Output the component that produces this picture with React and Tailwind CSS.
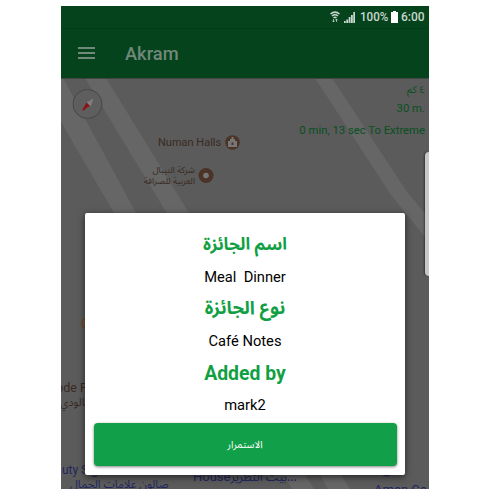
const ARABIC = 'font-["Noto_Sans_Arabic","Noto_Naskh_Arabic","DejaVu_Sans",sans-serif]';

function StatusBar() {
  return (
    <div className="flex h-[22px] items-center justify-end pr-[4px] text-[12px] font-medium text-[#c9d8ce]">
      <svg className="mr-[4px] h-[12px] w-[10px]" viewBox="0 0 10 12" fill="none" stroke="currentColor">
        <path d="M.5 3Q5-.8 9.500 3M2 5Q5 2.500 8 5M3.500 6.800Q5 5.700 6.500 6.800" strokeWidth="1.500" />
        <path d="M3.500 8v3M2.300 9.800 3.500 11l1-1.200M6.500 11V8M5.500 9.200 6.500 8l1.200 1.200" strokeWidth=".8" />
      </svg>
      <svg className="mr-[5px] h-[11px] w-[11px]" viewBox="0 0 11 11" fill="currentColor">
        <path d="M0 9h1.700v2H0zM2.300 7.500h1.800V11H2.300zM4.700 5h1.800v6H4.700zM7 3h1.800v8H7zM9.300 0H11v11H9.300z" />
      </svg>
      <span className="w-[28px] origin-left scale-x-[.97] scale-y-110 whitespace-nowrap">100%</span>
      <svg className="mr-[3px] ml-[3px] h-[12px] w-[7px]" viewBox="0 0 7 12" fill="#fff">
        <path d="M2 0h3v1h2v11H0V1h2z" />
      </svg>
      <span className="w-[24px] scale-y-110 whitespace-nowrap">6:00</span>
    </div>
  );
}

function AppBar() {
  return (
    <div className="flex h-[50px] items-center border-t border-[#043c18] pl-[17px]">
      <svg className="h-[13px] w-[17px]" viewBox="0 0 17 13" fill="#71887a">
        <path d="M0 0h17v2H0zM0 5h17v2H0zM0 10h17v2H0z" />
      </svg>
      <h1 className="ml-[30px] text-[18.300px] font-medium text-[#71887a]">Akram</h1>
    </div>
  );
}

function TripInfo() {
  return (
    <div className="flex flex-col items-end pt-[5px] pr-[4px] text-[11.300px] leading-[14px] whitespace-nowrap text-[#07501f]">
      <span dir="rtl" className={`text-[10px] ${ARABIC}`}>٤ كم</span>
      <span className="pt-[5px]">30 m.</span>
      <span className="pt-[8px]">0 min, 13 sec To Extreme</span>
    </div>
  );
}

function MapCanvas() {
  return (
    <div className="relative flex-1 overflow-hidden bg-[#5b5b5b]">
      <svg className="absolute inset-0 h-[411px] w-[368px]" viewBox="61 78 368 411">
        <path
          fill="#666"
          d="M61 78h2L136 213 152 242H131L61 122zM85 78h21L189 213l20 32H186zM315 78h17L407 192 429 218v24L391 195zM278 464h20l16 25h-22zM314 464h20l16 25h-22z"
        />
        <path d="M61 78.500h368" stroke="#444" />
        <circle cx="87.500" cy="104" r="14.500" fill="#5e5e5e" stroke="#464646" />
        <path d="m93.500 98.500-7 4 4 4z" fill="#808080" />
        <path d="m86.500 102.500-4.500 8 3-.500 1-2 4-2z" fill="#8e1014" />
        <circle cx="232.500" cy="142.500" r="7.300" fill="#4b3427" />
        <path d="M228 141h2v-2h1.500v-2h2v2h1.500v2h2v6h-9z" fill="#777" />
        <path d="M231.500 142.500h2v2.500h-2z" fill="#4b3427" />
        <circle cx="206" cy="175.500" r="7.500" fill="#4b3427" />
        <circle cx="206" cy="175.500" r="2.800" fill="#777" />
        <circle cx="386.500" cy="470" r="6.500" fill="#272a5c" />
      </svg>
      <div className="relative">
        <TripInfo />
      </div>
      <div className="absolute top-[58px] left-[97px] text-[11px] leading-[14px] whitespace-nowrap text-[#392a22]">Numan Halls</div>
      <div dir="rtl" className={`absolute top-[87px] right-[234px] text-[8.800px] leading-[11px] whitespace-nowrap text-[#392a22] ${ARABIC}`}>
        شركة النيبال<br />العربية للصرافة
      </div>
      <div className="absolute top-[239px] left-[20px] text-[12px] leading-[14px] text-[#83410f]">C</div>
      <div className="absolute top-[303px] left-[-5px] text-[12.500px] leading-[14px] whitespace-nowrap text-[#392a22]">ode Plaza</div>
      <div dir="rtl" className={`absolute top-[318px] left-[-1px] text-[11px] leading-[14px] text-[#392a22] ${ARABIC}`}>جالودي</div>
      <div className="absolute top-[385px] left-px text-[12px] leading-[14px] whitespace-nowrap text-[#22265e]">uty Signs</div>
      <div dir="rtl" className={`absolute top-[399px] left-[9px] text-[11.300px] leading-[15px] whitespace-nowrap text-[#22265e] ${ARABIC}`}>صالون علامات الجمال</div>
      <div className="absolute top-[392px] left-[132px] flex items-center text-[13px] leading-[14px] whitespace-nowrap text-[#22265e]">
        House<span className={`text-[12.200px] ${ARABIC}`}>بيت التطريز...</span>
      </div>
      <div className="absolute top-[405px] left-[313px] text-[13px] leading-[14px] whitespace-nowrap text-[#22265e]">Aman Co</div>
    </div>
  );
}

function PrizeDialog() {
  return (
    <div className="absolute inset-0 flex items-start justify-center pt-[207px]">
      <div className="flex h-[262px] w-[320px] flex-col items-center justify-end rounded-[2px] bg-white pb-[9px] text-[14.700px] text-black shadow-[0_2px_7px_rgba(0,0,0,.6)]">
        <h2 dir="rtl" className={`flex h-[32px] items-center text-[17.200px] font-bold text-[#119f43] ${ARABIC}`}>اسم الجائزة</h2>
        <p className="flex h-[32px] items-center whitespace-pre">Meal  Dinner</p>
        <h2 dir="rtl" className={`flex h-[32px] items-center text-[18.300px] font-bold text-[#119f43] ${ARABIC}`}>نوع الجائزة</h2>
        <p className="flex h-[32px] items-center">Café Notes</p>
        <h2 className="flex h-[32px] scale-y-105 items-center pt-[2px] text-[19.400px] font-bold text-[#119f43]">Added by</h2>
        <p className="flex h-[32px] items-center">mark2</p>
        <button dir="rtl" className={`mt-[2px] h-[43px] w-[303px] shrink-0 rounded-[4px] bg-[#129f49] text-[10px] text-white shadow-[0_1px_3px_rgba(0,0,0,.5)] ${ARABIC}`}>الاستمرار</button>
      </div>
    </div>
  );
}

export default function App() {
  return (
    <div className="h-[489px] w-[489px] overflow-hidden bg-white pt-[6px] pl-[61px] font-[Roboto,sans-serif]">
      <div className="relative flex h-[483px] w-[368px] flex-col overflow-hidden bg-[#04431c]">
        <StatusBar />
        <AppBar />
        <MapCanvas />
        <div className="absolute top-[146px] right-0 h-[124px] w-[4px] rounded-l-[4px] bg-[#c8c8c8] shadow-[-1px_0_2px_rgba(0,0,0,.4)]" />
        <PrizeDialog />
      </div>
    </div>
  );
}
